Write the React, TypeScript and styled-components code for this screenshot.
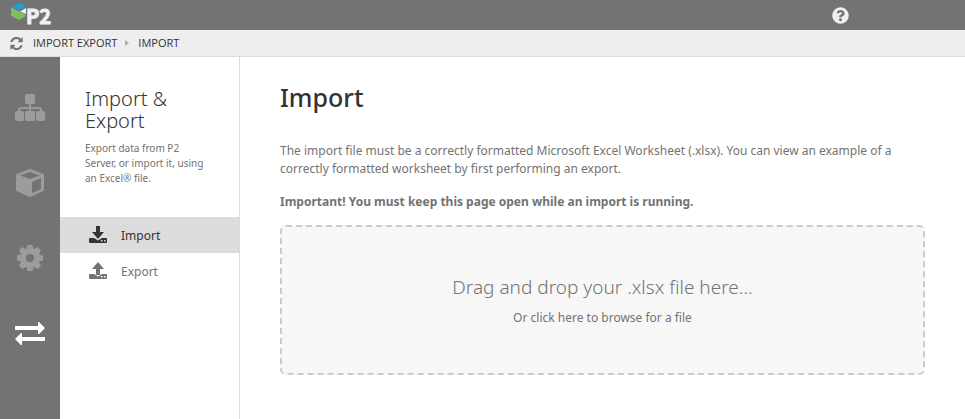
import React from "react";
import styled, { createGlobalStyle, css } from "styled-components";
import { FaQuestionCircle } from "react-icons/fa";

const Global = createGlobalStyle`
  *, *::before, *::after { box-sizing: border-box; }
  body { margin: 0; background: #fff; color: #737373; font: 12px/18px "Noto Sans", "Open Sans", sans-serif; }
  h1, h2, p, ul, ol { margin: 0; padding: 0; }
  ul, ol { list-style: none; }
  a { color: inherit; text-decoration: none; }
  button { border: 0; padding: 0; background: none; color: inherit; font: inherit; cursor: pointer; }
  svg { display: block; flex: none; }
`;

const Page = styled.div`
  min-height: 100vh;
  display: flex;
  flex-direction: column;
`;

const TopBar = styled.header`
  height: 30px;
  display: flex;
  align-items: center;
  justify-content: space-between;
  padding: 0 116px 0 10px;
  background: #737373;
  color: #f0f0f0;
`;

const Breadcrumbs = styled.nav`
  height: 27px;
  display: flex;
  align-items: center;
  padding: 0 10px;
  background: #eee;
  border-bottom: 1px solid #dcdcdc;
  color: #333;
  font-family: "Open Sans", sans-serif;
  font-size: 11px;
  line-height: 16px;
`;

const RefreshButton = styled.button`
  color: #737373;
  margin-right: 10px;
`;

const Trail = styled.ol`
  display: flex;
  align-items: center;
`;

const Crumb = styled.li`
  display: flex;
  align-items: center;

  & + &::before {
    content: "";
    margin: 0 9px 0 8px;
    border: solid transparent;
    border-width: 3px 0 3px 4px;
    border-left-color: #aaa;
  }
`;

const Body = styled.div`
  flex: 1;
  display: flex;
`;

const Rail = styled.nav`
  width: 60px;
  flex: none;
  display: flex;
  flex-direction: column;
  padding-top: 13px;
  background: #737373;
`;

const RailLink = styled.a<{ $active?: boolean }>`
  height: 75px;
  display: grid;
  place-items: center;
  color: ${(p) => (p.$active ? "#fff" : "#9c9c9c")};
`;

const Sidebar = styled.aside`
  width: 180px;
  flex: none;
  padding-top: 31px;
  border-right: 1px solid #dcdcdc;
`;

const SidebarIntro = styled.div`
  padding: 0 30px 31px 25px;
  font-size: 10px;
  line-height: 15px;
`;

const SidebarTitle = styled.h2`
  margin-bottom: 9px;
  color: #333;
  font-size: 20px;
  font-weight: 300;
  line-height: 22px;
`;

const MenuLink = styled.a<{ $active?: boolean }>`
  height: 36px;
  display: flex;
  align-items: center;
  gap: 13px;
  padding: 1px 0 0 28px;
  ${(p) => p.$active && css`background: #dcdcdc; color: #333;`}
`;

const Main = styled.main`
  flex: 1;
  min-width: 0;
  padding: 21px 40px 40px;
`;

const Title = styled.h1`
  margin-bottom: 26px;
  color: #333;
  font-size: 25px;
  font-weight: 500;
  line-height: 38px;
`;

const Text = styled.p`
  margin-bottom: 15px;
`;

const Notice = styled.p`
  margin-bottom: 14px;
  font-weight: 700;
`;

const DropZone = styled.label`
  position: relative;
  height: 150px;
  display: flex;
  flex-direction: column;
  align-items: center;
  justify-content: center;
  gap: 9px;
  border: 2px dashed #ccc;
  border-radius: 6px;
  background: #f7f7f7;
  text-align: center;
  cursor: pointer;
`;

const DropTitle = styled.span`
  font-size: 19px;
  font-weight: 300;
  line-height: 26px;
`;

const FileInput = styled.input`
  position: absolute;
  inset: 0;
  width: 100%;
  height: 100%;
  opacity: 0;
  cursor: pointer;
`;

const Logo = () => (
  <svg width="48" height="30" viewBox="0 0 48 30" role="img" aria-label="P2">
    <path d="M2 6 9 3l7 3-7 4z" fill="#1ba0dc" />
    <path d="M1 7l8 4.500 6 3v2l-6 3.500-8-4.500z" fill="#7fbf5f" />
    <path d="M10 11.500 16 8v6z" fill="#f0f0f0" />
    <text x="16" y="24" fill="#f0f0f0" stroke="#f0f0f0" strokeWidth="1" fontFamily="'Noto Sans CJK SC', sans-serif" fontWeight="700" fontSize="20">P2</text>
  </svg>
);

const RefreshIcon = () => (
  <svg width="13" height="13" viewBox="0 0 512 512" fill="currentColor" aria-hidden="true">
    <path d="M500 20v165a20 20 0 0 1-20 20H335c-18 0-26-22-14-34l45-45C280 45 150 70 108 180c-4 10-6 12-15 12H28c-12 0-14-10-12-18C60 0 280-65 428 68l40-40c13-13 32-8 32-8z" />
    <path d="M12 492V327a20 20 0 0 1 20-20h145c18 0 26 22 14 34l-45 45c86 81 216 56 258-54 4-10 6-12 15-12h65c12 0 14 10 12 18C452 512 232 577 84 444l-40 40c-13 13-32 8-32 8z" />
  </svg>
);

const SitemapIcon = () => (
  <svg width="32" height="28" viewBox="0 0 32 28" fill="currentColor" aria-hidden="true">
    <rect x="11" y="0" width="10" height="10" rx="2" />
    <rect x="1" y="17" width="9" height="10" rx="2" />
    <rect x="11" y="17" width="10" height="10" rx="2" />
    <rect x="22" y="17" width="9" height="10" rx="2" />
    <path d="M16 9v10M5 19v-3q0-2 2-2h18q2 0 2 2v3" fill="none" stroke="currentColor" strokeWidth="2" />
  </svg>
);

const CubeIcon = () => (
  <svg width="30" height="30" viewBox="0 0 30 30" aria-hidden="true">
    <path d="M15 2 28 7v15l-13 6-13-6V7z" fill="currentColor" stroke="currentColor" strokeWidth="2" strokeLinejoin="round" />
    <path d="M5 7.500 15 4l10 3.500L15 11zM17 14l9-4v11l-9 4z" fill="#737373" />
  </svg>
);

const GearIcon = () => (
  <svg width="28" height="28" viewBox="-14 -14 28 28" fill="currentColor" aria-hidden="true">
    {[0, 45, 90, 135].map((angle) => (
      <path key={angle} transform={`rotate(${angle})`} d="M-2.500-13h5l1 4h-7zM-2.500 13h5l1-4h-7z" />
    ))}
    <circle r="7" fill="none" stroke="currentColor" strokeWidth="6" />
  </svg>
);

const TransferIcon = () => (
  <svg width="32" height="26" viewBox="0 0 32 26" fill="currentColor" aria-hidden="true">
    <path d="M1 6h23V2h1l6 6-6 6h-1v-4H1zM31 21H8v4H7l-6-6 6-6h1v4h23z" />
  </svg>
);

const TrayIcon = ({ up = false }: { up?: boolean }) => (
  <svg width="20" height="20" viewBox="0 0 20 20" fill="currentColor" aria-hidden="true">
    <path d={up ? "M10 0l6 7h-4v6H8V7H4z" : "M8 0h4v6h4l-6 7-6-7h4z"} />
    <path fillRule="evenodd" d="M2 12h4l4 2.500 4-2.500h4q1 0 1 1v3q0 1-1 1H2q-1 0-1-1v-3q0-1 1-1zM13 14v1.500h1.500V14zM16 14v1.500h1.500V14z" />
  </svg>
);

const sections = [
  { label: "Hierarchy", icon: <SitemapIcon /> },
  { label: "Objects", icon: <CubeIcon /> },
  { label: "Settings", icon: <GearIcon /> },
  { label: "Import Export", icon: <TransferIcon />, active: true },
];

export default function App() {
  return (
    <Page>
      <Global />
      <TopBar>
        <Logo />
        <button type="button" aria-label="Help"><FaQuestionCircle size={17} /></button>
      </TopBar>
      <Breadcrumbs aria-label="Breadcrumb">
        <RefreshButton type="button" aria-label="Refresh"><RefreshIcon /></RefreshButton>
        <Trail>
          <Crumb><a href="#import-export">IMPORT EXPORT</a></Crumb>
          <Crumb><a href="#import">IMPORT</a></Crumb>
        </Trail>
      </Breadcrumbs>
      <Body>
        <Rail aria-label="Sections">
          {sections.map((s) => (
            <RailLink key={s.label} href="#" aria-label={s.label} $active={s.active}>{s.icon}</RailLink>
          ))}
        </Rail>
        <Sidebar>
          <SidebarIntro>
            <SidebarTitle>Import &amp; Export</SidebarTitle>
            <p>Export data from P2 Server, or import it, using an Excel® file.</p>
          </SidebarIntro>
          <ul>
            <li><MenuLink href="#import" $active><TrayIcon />Import</MenuLink></li>
            <li><MenuLink href="#export"><TrayIcon up />Export</MenuLink></li>
          </ul>
        </Sidebar>
        <Main>
          <Title>Import</Title>
          <Text>
            The import file must be a correctly formatted Microsoft Excel Worksheet (.xlsx). You can view an example of a
            correctly formatted worksheet by first performing an export.
          </Text>
          <Notice>Important! You must keep this page open while an import is running.</Notice>
          <DropZone>
            <DropTitle>Drag and drop your .xlsx file here...</DropTitle>
            <span>Or click here to browse for a file</span>
            <FileInput type="file" accept=".xlsx" />
          </DropZone>
        </Main>
      </Body>
    </Page>
  );
}
